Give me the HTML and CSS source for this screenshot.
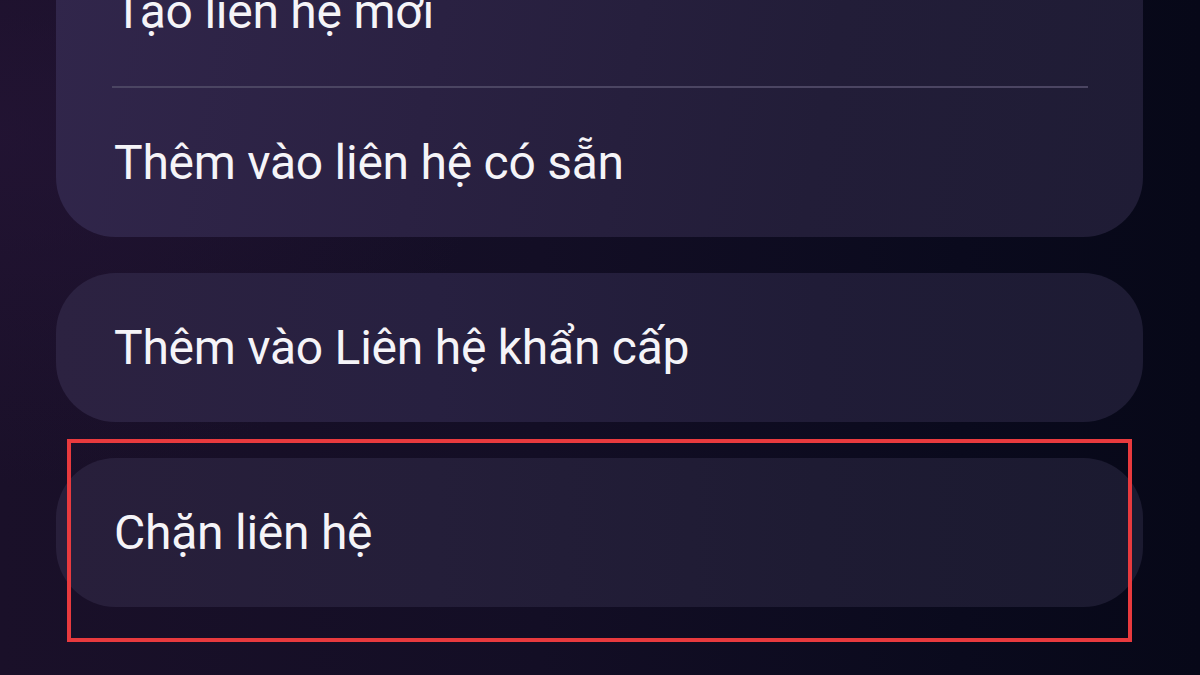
FILE: index.html
```html
<!DOCTYPE html>
<html lang="vi">
<head>
<meta charset="utf-8">
<title>Liên hệ</title>
<link rel="stylesheet" href="styles.css">
</head>
<body>
<main class="screen">
  <div class="menu">
    <section class="card card-top">
      <div class="row">Tạo liên hệ mới</div>
      <div class="divider"></div>
      <div class="row">Thêm vào liên hệ có sẵn</div>
    </section>
    <section class="card card-mid">
      <div class="row">Thêm vào Liên hệ khẩn cấp</div>
    </section>
    <section class="card card-bottom">
      <div class="row">Chặn liên hệ</div>
    </section>
  </div>
  <div class="highlight"></div>
</main>
</body>
</html>
```
FILE: styles.css
```css
html, body {
  margin: 0;
  padding: 0;
  width: 1200px;
  height: 675px;
  overflow: hidden;
}

body {
  background:
    radial-gradient(ellipse 700px 500px at 0% 20%, rgba(40, 22, 58, 0.55), rgba(40, 22, 58, 0) 70%),
    linear-gradient(90deg, #1a1029 0%, #130e25 45%, #0a0a1d 80%, #070818 100%);
  font-family: Roboto, "Noto Sans", "Liberation Sans", sans-serif;
  color: #f5f4f8;
}

.screen {
  position: relative;
  display: flow-root;
  width: 1200px;
  height: 675px;
}

.menu {
  display: flex;
  flex-direction: column;
  gap: 36px;
  padding: 0 57px 0 56px;
  margin-top: -62px;
}

.card {
  border-radius: 60px;
  overflow: hidden;
}

.card-top {
  background: linear-gradient(100deg, #31264b 0%, #2a2142 35%, #221d38 70%, #1f1c35 100%);
}

.card-mid {
  background: linear-gradient(90deg, #2c2241 0%, #272040 35%, #201c37 70%, #1d1b33 100%);
}

.card-bottom {
  background: linear-gradient(90deg, #281f3b 0%, #241e39 35%, #1e1b33 70%, #1b1a30 100%);
}

.row {
  height: 149px;
  display: flex;
  align-items: center;
  padding-left: 58px;
  font-size: 48px;
  letter-spacing: -0.25px;
  line-height: 1;
}

.card-top .row:first-child {
  height: 148px;
}

.divider {
  height: 2px;
  margin: 0 55px 0 56px;
  background: #4b4562;
}

.highlight {
  position: absolute;
  left: 67px;
  top: 439px;
  width: 1057px;
  height: 195px;
  border: 4px solid #e83a3e;
}
```
